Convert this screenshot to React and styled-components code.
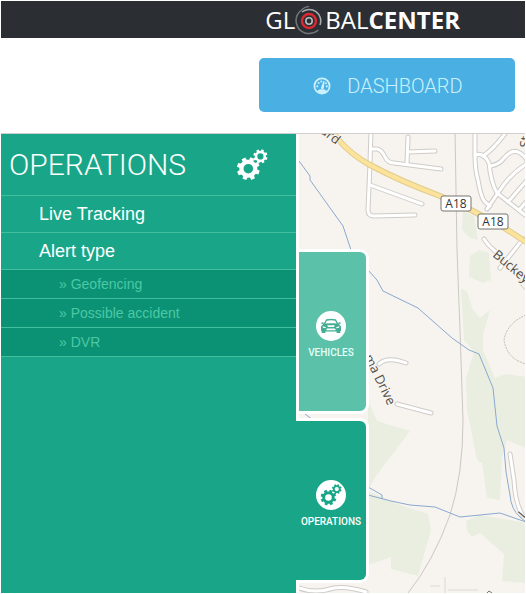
import React from "react";
import styled, { createGlobalStyle } from "styled-components";

const GlobalStyle = createGlobalStyle`
  * { box-sizing: border-box; }
  html, body, #root { height: 100%; }
  body { margin: 0; background: #fff; font-family: Roboto, sans-serif; }
  ul { list-style: none; margin: 0; padding: 0; }
`;

const Page = styled.div`
  min-height: 100%;
  padding: 1px;
  display: flex;
  flex-direction: column;
`;

const Header = styled.header`
  height: 37px;
  padding-right: 65px;
  display: flex;
  justify-content: flex-end;
  align-items: center;
  background: #2b2e33;
`;

const Brand = styled.a`
  display: flex;
  align-items: center;
  color: #fff;
  font: 400 24px/36px "Open Sans", sans-serif;
  text-decoration: none;
  svg { width: 27px; height: 30px; margin-right: 3px; }
  strong { font-weight: 700; }
`;

const ActionBar = styled.div`
  display: flex;
  justify-content: flex-end;
  padding: 20px 10px 21px;
`;

const DashboardButton = styled.button`
  width: 256px;
  height: 54px;
  padding: 2px 0 0 2px;
  display: flex;
  align-items: center;
  justify-content: center;
  gap: 16px;
  border: 0;
  border-radius: 5px;
  background: #4ab0e4;
  color: #c9f0fb;
  font: 300 20px/24px Roboto, sans-serif;
  cursor: pointer;
  svg { width: 18px; height: 18px; }
`;

const Workspace = styled.main`
  flex: 1;
  display: flex;
  border-top: 1px solid #cfcfcf;
`;

const Sidebar = styled.aside`
  width: 295px;
  flex: none;
  background: #19a688;
  color: #fff;
`;

const SidebarHead = styled.div`
  height: 61px;
  padding: 0 28px 0 8px;
  display: flex;
  align-items: center;
  justify-content: space-between;
  svg { width: 32px; height: 32px; }
`;

const Title = styled.h1`
  margin: 0;
  font: 300 30px/60px Roboto, sans-serif;
`;

const MenuLink = styled.a`
  display: block;
  border-top: 1px solid #43bf9f;
  padding-left: 38px;
  color: #fff;
  font: 18px/36px "Liberation Sans", Arial, sans-serif;
  text-decoration: none;
`;

const SubMenu = styled.ul`
  border-bottom: 1px solid #43bf9f;
  background: #0b9274;
`;

const SubLink = styled(MenuLink)`
  padding-left: 58px;
  color: #4bc8a5;
  font-size: 14px;
  line-height: 28px;
`;

const MapPane = styled.section`
  flex: 1;
  min-width: 0;
  position: relative;
  border-left: 3px solid #fff;
`;

const MapDrawing = styled.svg`
  display: block;
  position: absolute;
  width: 100%;
  height: 100%;
  background: #f7f4ef;
`;

const Tabs = styled.nav`
  position: absolute;
  top: 115px;
  left: -3px;
  display: flex;
  flex-direction: column;
  gap: 4px;
`;

const Tab = styled.button`
  width: 73px;
  height: 165px;
  padding: ${(p) => (p.$active ? "7px 0 0" : "7px 3px 0 0")};
  display: flex;
  flex-direction: column;
  align-items: center;
  justify-content: center;
  gap: 6px;
  border: 3px solid #fff;
  border-left: ${(p) => (p.$active ? "0" : "3px solid #fff")};
  border-radius: 0 9px 9px 0;
  background: ${(p) => (p.$active ? "#19a688" : "#5bc1a9")};
  color: ${(p) => (p.$active ? "#fff" : "#e4fff7")};
  font: 500 10px/12px Roboto, sans-serif;
  cursor: pointer;
`;

const Disc = styled.span`
  width: 30px;
  height: 30px;
  display: grid;
  place-items: center;
  border-radius: 50%;
  background: #fff;
  color: ${(p) => (p.$active ? "#19a688" : "#45ad94")};
  svg { width: 22px; height: 22px; }
`;

function gearPath(cx, cy, outer, inner, hole, teeth, turn = 0) {
  const points = [];
  const step = (Math.PI * 2) / teeth;
  for (let i = 0; i < teeth; i += 1) {
    [[-0.32, inner], [-0.22, outer], [0.22, outer], [0.32, inner]].forEach(([k, r]) => {
      const a = (i + k) * step + turn;
      points.push(`${(cx + r * Math.cos(a)).toFixed(2)} ${(cy + r * Math.sin(a)).toFixed(2)}`);
    });
  }
  return `M${points.join("L")}Z M${cx - hole} ${cy}a${hole} ${hole} 0 1 0 ${hole * 2} 0a${hole} ${hole} 0 1 0 ${-hole * 2} 0Z`;
}

const Gears = () => (
  <svg viewBox="0 0 32 32" fill="currentColor" fillRule="evenodd" aria-hidden="true">
    <path d={gearPath(12.3, 19.7, 11.6, 9, 4.8, 8, 0.35)} />
    <path d={gearPath(24.4, 7.4, 7.2, 5.6, 3.1, 8, 0.35)} />
  </svg>
);

const Gauge = () => (
  <svg viewBox="0 0 18 18" aria-hidden="true">
    <circle cx="9" cy="9" r="7.6" fill="none" stroke="currentColor" strokeWidth="1.8" />
    <path d="M4.5 14.5c0-1.8 2-2.3 4.5-2.3s4.5.5 4.5 2.3L11 16.5H7Z" fill="currentColor" />
    <path d="M8 10.5 10.5 4l1.2.3-.9 6.8c-.3 1.8-3.2 1.3-2.8-.6Z" fill="currentColor" />
    <g fill="currentColor">
      <circle cx="4.3" cy="9.3" r="1.1" /><circle cx="5.6" cy="6" r="1.1" />
      <circle cx="8.3" cy="4.5" r="1" /><circle cx="13" cy="6.3" r="1" /><circle cx="13.8" cy="9.3" r="1.1" />
    </g>
  </svg>
);

const Car = () => (
  <svg viewBox="0 0 22 22" aria-hidden="true">
    <path d="M4.3 9 6.5 5Q11 4 15.5 5L17.7 9" fill="none" stroke="currentColor" strokeWidth="1.4" />
    <path fillRule="evenodd" fill="currentColor" d="M3.5 8.6Q11 7.8 18.5 8.6L21 11.5V15.8L20.3 16V18H16.6V16.4H5.4V18H1.7V16L1 15.8V11.5ZM7.2 10.2 8 12H14L14.8 10.2ZM7 13.6 6.2 15.2H15.8L15 13.6ZM2.5 11.2 3 12.8 6 13.2 5.4 12ZM19.5 11.2 19 12.8 16 13.2 16.6 12Z" />
    <path d="M.8 7.8 3.2 7.2 4 8.6 2 9ZM21.2 7.8 18.8 7.2 18 8.6 20 9Z" fill="currentColor" />
  </svg>
);

const Target = () => (
  <svg viewBox="0 0 27 30" fill="none" aria-hidden="true">
    <path d="M6 5.5A13 13 0 0 0 10 28Q17 30 23.5 25" stroke="#74787c" strokeWidth="1.5" />
    <path d="M7 7A11.5 11.5 0 0 1 25 20" stroke="#a9acaf" strokeWidth="1.6" />
    <path d="M6 5.5Q9 2 14 1.4" stroke="#74787c" strokeWidth="1.2" />
    <circle cx="14" cy="16" r="7" stroke="#dc2833" strokeWidth="2.4" />
    <circle cx="14" cy="16" r="3.2" stroke="#b9bcbf" strokeWidth="1.6" />
  </svg>
);

const minorRoads = [
  "M371 130L370 163L368 210Q368 216 374 216L415 215",
  "M371 149H377Q382 150 385 157Q388 163 394 163L441 169",
  "M408 137L407 164M408 152L435 151",
  "M370 185L422 204",
  "M475 130V155Q475 170 478 180Q481 198 485 202L490 206",
  "M475 155Q484 152 489 163Q491 183 497 193L525 215",
  "M483 156Q493 150 507 131",
  "M491 166Q500 164 504 158Q512 148 520 153Q525 156 528 162",
  "M487 209L500 190Q511 173 528 163",
  "M508 202L528 179M519 210L528 200",
  "M484 239Q489 247 500 255",
  "M523 239L500 268",
  "M379 364Q387 356 406 363",
  "M397 404L431 413",
  "M510 454L514 480Q515 503 523 516",
  "M299 588Q315 594 334 588Q347 586 366 592",
];

const streams = [
  "M299 161L310 176V180L343 226L351 250",
  "M368 270L377 280L383 291L418 308L452 338L469 350L479 354L493 388L497 426L504 448Q505 472 510 495Q511 509 520 517L526 522",
  "M368 487L382 495V499M368 495L391 501L410 505L435 507L460 517L500 513L526 522",
  "M305 414L313 420",
];

const woods = [
  "M463 211L474 216L478 240L470 238L462 230Z",
  "M470 256L479 250L489 253L491 280L483 283L469 277Z",
  "M461 288L467 292L473 310L480 318L490 310L483 335L483 350L495 378L506 374L526 377V448L507 440L502 458L500 500L487 498L482 463L477 460L467 410L466 378L474 352L464 340Z",
  "M368 400L377 421L410 431L376 476L368 490Z",
  "M368 491L400 505L428 514L431 530L418 576L391 569V557L368 565Z",
  "M466 521L480 515L526 523V583L502 581L504 554L480 533L472 537L467 531Z",
];

const Shield = ({ x, y }) => (
  <g transform={`translate(${x} ${y})`}>
    <rect width="30" height="15" rx="2" fill="#fff" stroke="#77756f" />
    <text x="15" y="12" textAnchor="middle" fontSize="12" fill="#333">A18</text>
  </g>
);

const StreetMap = () => (
  <MapDrawing viewBox="299 134 226 459" preserveAspectRatio="xMinYMin slice" role="img" aria-label="Street map" fontFamily="Open Sans, sans-serif">
    <g fill="#e9eee1">{woods.map((d) => <path key={d} d={d} />)}</g>
    <path d="M455 130L457 250L460 330L463 420Q463 475 450 515Q433 562 408 593" fill="none" stroke="#cbc8c3" />
    <path d="M526 315Q507 323 504 340Q507 359 526 364M526 291L520 284V278" fill="none" stroke="#bdb8b1" strokeDasharray="2 1" />
    <path d="M430 586H440M448 590H478" fill="none" stroke="#ebe6e1" strokeWidth="2" />
    <path d="M445 577V593" fill="none" stroke="#dcd7d2" />
    <path d="M487 593L489 591L492 593" fill="none" stroke="#77736f" />
    <g fill="none" stroke="#8aa9cf" strokeWidth="1">{streams.map((d) => <path key={d} d={d} />)}</g>
    <g fill="none" stroke="#cfccc8" strokeWidth="5" strokeLinecap="round">{minorRoads.map((d) => <path key={d} d={d} />)}</g>
    <g fill="none" stroke="#fff" strokeWidth="3" strokeLinecap="round">{minorRoads.map((d) => <path key={d} d={d} />)}</g>
    <g fill="none">
      <path d="M330 129L337 138Q350 154 370 165Q400 181 440 196L473 211L503 227L526 242" stroke="#e1cc8b" strokeWidth="6" />
      <path d="M330 129L337 138Q350 154 370 165Q400 181 440 196L473 211L503 227L526 242" stroke="#fbe39c" strokeWidth="4" />
    </g>
    <Shield x={441} y={196} />
    <Shield x={478} y={214} />
    <g fill="#514d4a" fontSize="13" stroke="#f7f4ef" strokeWidth="2" paintOrder="stroke">
      <text transform="translate(336 145) rotate(38)" textAnchor="end">ard</text>
      <text transform="translate(492 256) rotate(40)">Buckey</text>
      <text transform="translate(388 406) rotate(64)" textAnchor="end">ma Drive</text>
      <text transform="translate(529 148) rotate(-85)">St</text>
      <text transform="translate(524 519) rotate(-50)">L</text>
    </g>
  </MapDrawing>
);

export default function App() {
  return (
    <Page>
      <GlobalStyle />
      <Header>
        <Brand href="#" aria-label="Global Center">
          <span>GL</span><Target /><span>BAL</span><strong>CENTER</strong>
        </Brand>
      </Header>
      <ActionBar>
        <DashboardButton type="button"><Gauge />DASHBOARD</DashboardButton>
      </ActionBar>
      <Workspace>
        <Sidebar>
          <SidebarHead><Title>OPERATIONS</Title><Gears /></SidebarHead>
          <ul>
            <li><MenuLink href="#">Live Tracking</MenuLink></li>
            <li>
              <MenuLink href="#">Alert type</MenuLink>
              <SubMenu>
                {["Geofencing", "Possible accident", "DVR"].map((name) => (
                  <li key={name}><SubLink href="#">» {name}</SubLink></li>
                ))}
              </SubMenu>
            </li>
          </ul>
        </Sidebar>
        <MapPane>
          <StreetMap />
          <Tabs aria-label="Sections">
            <Tab type="button"><Disc><Car /></Disc>VEHICLES</Tab>
            <Tab type="button" $active><Disc $active><Gears /></Disc>OPERATIONS</Tab>
          </Tabs>
        </MapPane>
      </Workspace>
    </Page>
  );
}
